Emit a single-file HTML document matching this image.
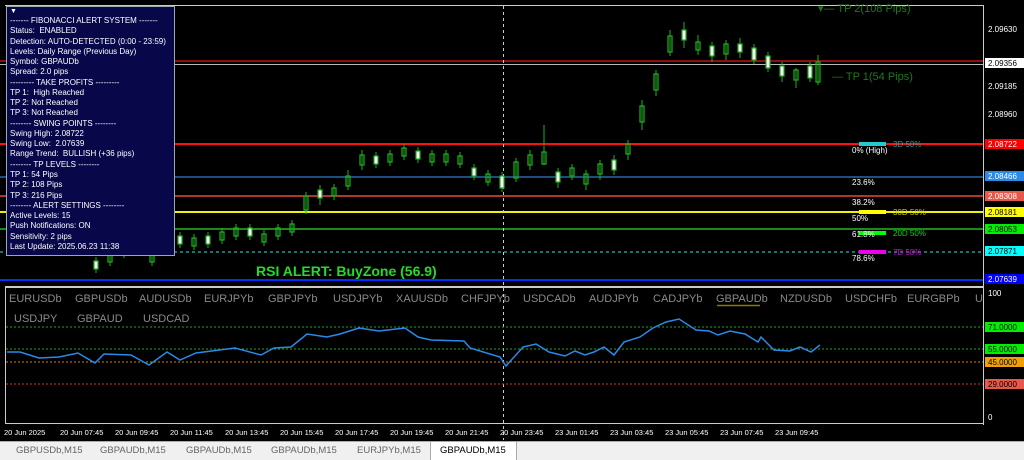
<!DOCTYPE html><html><head><style>
body{margin:0;width:1024px;height:459px;background:#000;overflow:hidden;font-family:"Liberation Sans",sans-serif}
svg{position:absolute;left:0;top:0}
#panel{position:absolute;left:6px;top:6px;width:169px;height:250px;background:#07074a;border:1px solid #9aa;color:#fff;font-size:8px;line-height:10.27px;box-sizing:border-box;padding:1px 0 0 3px;white-space:pre}
#panel .ar{line-height:8px;font-size:7px}
#tabs{position:absolute;left:0;top:441px;width:1024px;height:18px;background:#f0f0f0;border-top:1px solid #aaa;font-size:9.5px;color:#666}
#tabs span{position:absolute;top:3px}
</style></head><body>
<svg width="1024" height="459" font-family="Liberation Sans, sans-serif">
<rect x="0" y="0" width="1024" height="459" fill="#000"/>
<line x1="5" y1="5.5" x2="983" y2="5.5" stroke="#ccc"/>
<line x1="983.5" y1="5" x2="983.5" y2="425" stroke="#ccc"/>
<line x1="5" y1="287" x2="983" y2="287" stroke="#ccc" stroke-width="2"/>
<line x1="5" y1="423.5" x2="983" y2="423.5" stroke="#ccc"/>
<line x1="5.5" y1="287" x2="5.5" y2="423" stroke="#ccc"/>
<line x1="0" y1="61" x2="983" y2="61" stroke="#8b1010" stroke-width="2"/>
<line x1="0" y1="64.5" x2="983" y2="64.5" stroke="#bbb"/>
<line x1="0" y1="144" x2="983" y2="144" stroke="#ff1010" stroke-width="2"/>
<line x1="0" y1="177" x2="983" y2="177" stroke="#1c4e80" stroke-width="2"/>
<line x1="0" y1="196" x2="983" y2="196" stroke="#e8483a" stroke-width="1.5"/>
<line x1="0" y1="212" x2="983" y2="212" stroke="#f0f000" stroke-width="2"/>
<line x1="0" y1="229" x2="983" y2="229" stroke="#1a8a1a" stroke-width="2"/>
<line x1="0" y1="252" x2="983" y2="252" stroke="#1a9a9a" stroke-width="1.5" stroke-dasharray="3,3"/>
<line x1="0" y1="280" x2="983" y2="280" stroke="#0030ff" stroke-width="2"/>
<line x1="503.5" y1="6" x2="503.5" y2="440" stroke="#ccc" stroke-dasharray="3,3"/>
<g stroke="#1fb01f" fill="none">
<path d="M96 257v16M110 250v16M124 242v16M138 240v16M152 250v16M166 237v16M180 232v16M194 234v16M208 232v16M222 228v16M236 224v16M250 224v16M264 230v16M278 224v16M292 220v16M306 192v22M320 185v20M334 184v16M348 170v20M362 150v20M376 152v16M390 150v16M404 144v16M418 147v16M432 150v16M446 150v16M460 152v16M474 164v16M488 170v16M502 172v20M516 158v24M530 150v20M544 125v40M558 168v20M572 164v16M586 170v20M600 160v20M614 155v20M628 140v20M642 100v30M656 70v26M670 30v26M684 22v26M698 35v20M712 42v20M726 40v20M740 38v20M754 44v20M768 52v20M782 62v20M796 68v20M810 62v20M818 55v30"/>
<g stroke-width="1.2">
<rect x="94" y="261" width="4" height="8" fill="#fff"/><rect x="108" y="254" width="4" height="8"/><rect x="122" y="246" width="4" height="8"/><rect x="136" y="244" width="4" height="8" fill="#fff"/><rect x="150" y="254" width="4" height="8"/><rect x="164" y="241" width="4" height="8"/><rect x="178" y="236" width="4" height="8" fill="#fff"/><rect x="192" y="238" width="4" height="8"/><rect x="206" y="236" width="4" height="8" fill="#fff"/><rect x="220" y="232" width="4" height="8"/><rect x="234" y="228" width="4" height="8"/><rect x="248" y="228" width="4" height="8" fill="#fff"/><rect x="262" y="234" width="4" height="8"/><rect x="276" y="228" width="4" height="8"/><rect x="290" y="224" width="4" height="8"/><rect x="304" y="196" width="4" height="14"/><rect x="318" y="190" width="4" height="8" fill="#fff"/><rect x="332" y="188" width="4" height="8"/><rect x="346" y="176" width="4" height="10"/><rect x="360" y="155" width="4" height="10"/><rect x="374" y="156" width="4" height="8" fill="#fff"/><rect x="388" y="154" width="4" height="8"/><rect x="402" y="148" width="4" height="8"/><rect x="416" y="151" width="4" height="8" fill="#fff"/><rect x="430" y="154" width="4" height="8"/><rect x="444" y="154" width="4" height="8"/><rect x="458" y="156" width="4" height="8"/><rect x="472" y="168" width="4" height="8" fill="#fff"/><rect x="486" y="174" width="4" height="8"/><rect x="500" y="176" width="4" height="12" fill="#fff"/><rect x="514" y="162" width="4" height="16"/><rect x="528" y="155" width="4" height="10"/><rect x="542" y="152" width="4" height="12"/><rect x="556" y="172" width="4" height="10" fill="#fff"/><rect x="570" y="168" width="4" height="8"/><rect x="584" y="174" width="4" height="10"/><rect x="598" y="164" width="4" height="10"/><rect x="612" y="160" width="4" height="10" fill="#fff"/><rect x="626" y="144" width="4" height="10"/><rect x="640" y="106" width="4" height="16"/><rect x="654" y="74" width="4" height="16"/><rect x="668" y="36" width="4" height="16"/><rect x="682" y="30" width="4" height="10" fill="#fff"/><rect x="696" y="42" width="4" height="8"/><rect x="710" y="46" width="4" height="10" fill="#fff"/><rect x="724" y="44" width="4" height="10"/><rect x="738" y="44" width="4" height="8" fill="#fff"/><rect x="752" y="48" width="4" height="12" fill="#fff"/><rect x="766" y="56" width="4" height="12" fill="#fff"/><rect x="780" y="66" width="4" height="10" fill="#fff"/><rect x="794" y="70" width="4" height="10"/><rect x="808" y="66" width="4" height="12" fill="#fff"/><rect x="816" y="62" width="4" height="20"/>
</g></g>
<text x="256" y="276" fill="#22dd22" font-size="14" font-weight="bold">RSI ALERT: BuyZone (56.9)</text>
<text x="818" y="12" fill="#1a7a1a" font-size="11">▾— TP 2(108 Pips)</text>
<text x="832" y="80" fill="#1a7a1a" font-size="11">— TP 1(54 Pips)</text>
<g font-size="8" fill="#fff">
<rect x="859" y="142" width="27" height="4" fill="#2cc"/><text x="893" y="147" fill="#1fa0a0">3D 50%</text>
<text x="852" y="153">0% (High)</text>
<text x="852" y="185">23.6%</text>
<text x="852" y="205">38.2%</text>
<rect x="859" y="210" width="27" height="4" fill="#ff0"/><text x="893" y="215" fill="#cc0">30D 50%</text>
<text x="852" y="221">50%</text>
<rect x="859" y="231" width="27" height="4" fill="#0f0"/><text x="852" y="237">61.8%</text><text x="893" y="236" fill="#0d0">20D 50%</text>
<rect x="859" y="250" width="27" height="4" fill="#e0e"/><text x="893" y="255" fill="#d0d">7D 50%</text>
<text x="852" y="261">78.6%</text>
</g>
<g font-size="8" fill="#fff">
<text x="988" y="32">2.09630</text><text x="988" y="89">2.09185</text><text x="988" y="117">2.08960</text>
<rect x="985" y="58" width="39" height="10" fill="#fff"/><text x="988" y="66" fill="#000">2.09356</text>
<rect x="985" y="139" width="39" height="10" fill="#f00"/><text x="988" y="147" fill="#fff">2.08722</text>
<rect x="985" y="171" width="39" height="10" fill="#2a8ae8"/><text x="988" y="179">2.08466</text>
<rect x="985" y="191" width="39" height="10" fill="#e8584a"/><text x="988" y="199">2.08308</text>
<rect x="985" y="207" width="39" height="10" fill="#ff0"/><text x="988" y="215" fill="#000">2.08181</text>
<rect x="985" y="224" width="39" height="10" fill="#0e0"/><text x="988" y="232" fill="#000">2.08053</text>
<rect x="985" y="246" width="39" height="10" fill="#0ff"/><text x="988" y="254" fill="#000">2.07871</text>
<rect x="985" y="274" width="39" height="10" fill="#00f"/><text x="988" y="282">2.07639</text>
<text x="988" y="296">100</text><text x="988" y="420">0</text>
<rect x="985" y="322" width="39" height="10" fill="#0e0"/><text x="988" y="330" fill="#000">71.0000</text>
<rect x="985" y="344" width="39" height="10" fill="#0e0"/><text x="988" y="352" fill="#000">55.0000</text>
<rect x="985" y="357" width="39" height="10" fill="#f0a000"/><text x="988" y="365" fill="#000">45.0000</text>
<rect x="985" y="379" width="39" height="10" fill="#e8584a"/><text x="988" y="387" fill="#000">29.0000</text>
</g>
<line x1="6" y1="327" x2="983" y2="327" stroke="#1aaa1a" stroke-dasharray="2,2"/>
<line x1="6" y1="349" x2="983" y2="349" stroke="#1aaa1a" stroke-dasharray="2,2"/>
<line x1="6" y1="362" x2="983" y2="362" stroke="#d08000" stroke-dasharray="2,2"/>
<line x1="6" y1="384" x2="983" y2="384" stroke="#e03030" stroke-dasharray="2,2"/>
<polyline fill="none" stroke="#2a8ae8" stroke-width="1.5" points="7,352 20,352 39,358 59,357 78,353 95,363 104,354 131,355 149,365 167,352 180,360 196,353 235,348 261,355 274,348 291,347 307,334 327,337 340,334 359,328 379,331 405,328 418,337 431,340 464,341 470,348 500,357 506,366 523,347 536,344 549,352 565,356 575,351 585,355 594,352 604,347 614,355 624,342 640,337 653,328 666,322 679,319 696,330 709,331 718,335 730,331 745,334 758,342 761,337 774,350 790,351 800,347 811,352 820,345"/>
<g font-size="11" fill="#8a8a8a">
<text x="9" y="302">EURUSDb</text><text x="75" y="302">GBPUSDb</text><text x="139" y="302">AUDUSDb</text><text x="204" y="302">EURJPYb</text><text x="268" y="302">GBPJPYb</text><text x="333" y="302">USDJPYb</text><text x="396" y="302">XAUUSDb</text><text x="461" y="302">CHFJPYb</text><text x="523" y="302">USDCADb</text><text x="589" y="302">AUDJPYb</text><text x="653" y="302">CADJPYb</text><text x="716" y="302">GBPAUDb</text><text x="780" y="302">NZDUSDb</text><text x="845" y="302">USDCHFb</text><text x="907" y="302">EURGBPb</text><text x="975" y="302">U</text>
<text x="14" y="322">USDJPY</text><text x="77" y="322">GBPAUD</text><text x="143" y="322">USDCAD</text>
</g>
<line x1="717" y1="305.5" x2="760" y2="305.5" stroke="#8a7a00" stroke-width="1.5"/>
<g font-size="7.5" fill="#fff">
<text x="4" y="435">20 Jun 2025</text><text x="60" y="435">20 Jun 07:45</text><text x="115" y="435">20 Jun 09:45</text><text x="170" y="435">20 Jun 11:45</text><text x="225" y="435">20 Jun 13:45</text><text x="280" y="435">20 Jun 15:45</text><text x="335" y="435">20 Jun 17:45</text><text x="390" y="435">20 Jun 19:45</text><text x="445" y="435">20 Jun 21:45</text><text x="500" y="435">20 Jun 23:45</text><text x="555" y="435">23 Jun 01:45</text><text x="610" y="435">23 Jun 03:45</text><text x="665" y="435">23 Jun 05:45</text><text x="720" y="435">23 Jun 07:45</text><text x="775" y="435">23 Jun 09:45</text>
</g>
</svg>
<div id="panel"><div class="ar">▼</div>------- FIBONACCI ALERT SYSTEM -------
Status:  ENABLED
Detection: AUTO-DETECTED (0:00 - 23:59)
Levels: Daily Range (Previous Day)
Symbol: GBPAUDb
Spread: 2.0 pips
--------- TAKE PROFITS ---------
TP 1:  High Reached
TP 2: Not Reached
TP 3: Not Reached
-------- SWING POINTS --------
Swing High: 2.08722
Swing Low:  2.07639
Range Trend:  BULLISH (+36 pips)
-------- TP LEVELS --------
TP 1: 54 Pips
TP 2: 108 Pips
TP 3: 216 Pips
-------- ALERT SETTINGS --------
Active Levels: 15
Push Notifications: ON
Sensitivity: 2 pips
Last Update: 2025.06.23 11:38</div>
<div id="tabs">
<span style="left:16px">GBPUSDb,M15</span><span style="left:100px">GBPAUDb,M15</span><span style="left:186px">GBPAUDb,M15</span><span style="left:271px">GBPAUDb,M15</span><span style="left:357px">EURJPYb,M15</span>
<div style="position:absolute;left:430px;top:-1px;width:85px;height:18px;background:#fff;border:1px solid #aaa;border-bottom:none"></div><span style="left:440px;color:#000">GBPAUDb,M15</span>
</div>
</body></html>
